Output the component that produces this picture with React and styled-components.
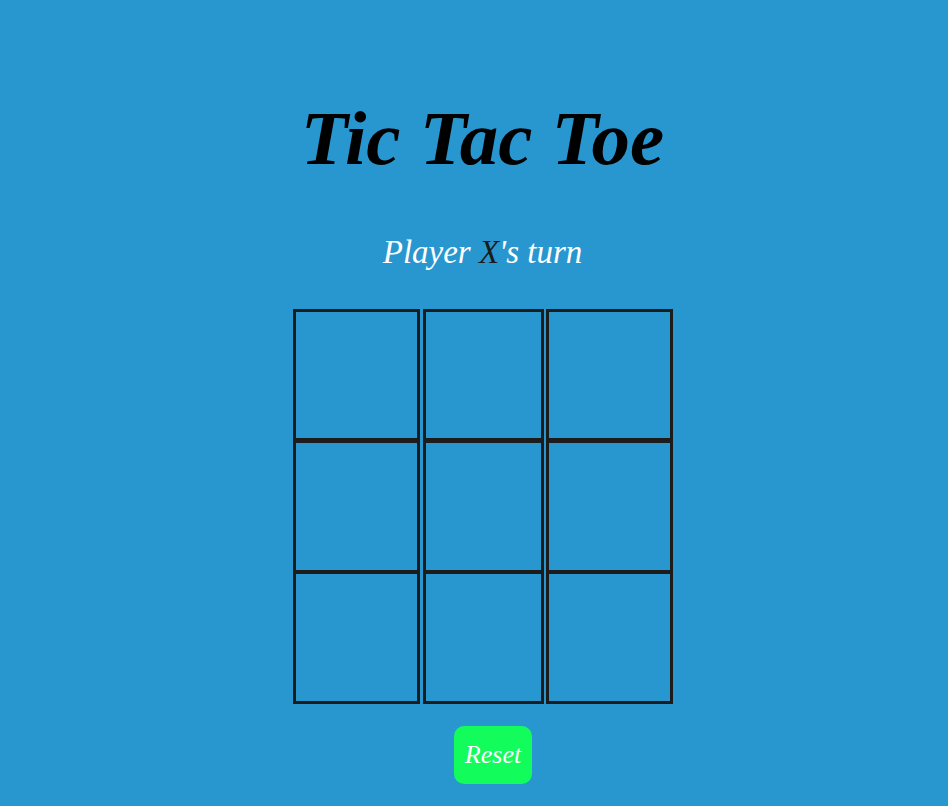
import styled, { createGlobalStyle } from 'styled-components'

const GlobalStyle = createGlobalStyle`
    body {
        margin: 0;
        background-color: #2997cf;
        font-family: "Liberation Serif", "Times New Roman", serif;
    }
`

const Container = styled.div`
    min-height: 100vh;
    padding-left: 17px;
    display: flex;
    flex-direction: column;
    align-items: center;
`
const Title = styled.h1`
    margin: 100px 0 0;
    font-size: 77px;
    line-height: 1;
    font-weight: 700;
    font-style: italic;
    color: #000;
`
const Status = styled.p`
    margin: 59px 0 0;
    font-size: 33px;
    line-height: 1;
    font-style: italic;
    color: #fff;
`
const Mark = styled.span`
    color: #1b1b1b;
`
const Board = styled.div`
    margin-top: 40px;
    display: flex;
    flex-direction: column;
`
const Row = styled.div`
    display: flex;
    margin-top: ${p => p.$overlap || 0}px;
`
const Cell = styled.div`
    box-sizing: border-box;
    width: ${p => p.$w}px;
    height: ${p => p.$h}px;
    margin-left: ${p => p.$gap || 0}px;
    border: 3px solid #1c1c1c;
`
const Button = styled.button`
    margin: 22px 0 0 21px;
    width: 78px;
    height: 58px;
    border: none;
    border-radius: 10px;
    background-color: #12fc5c;
    color: #fff;
    font-family: inherit;
    font-style: italic;
    font-size: 26px;
    padding: 0;
    cursor: pointer;
`

const rows = [
    { h: 132, overlap: 0 },
    { h: 133, overlap: -1 },
    { h: 133, overlap: -2 },
]
const cols = [
    { w: 127, gap: 0 },
    { w: 121, gap: 3 },
    { w: 127, gap: 2 },
]

const App = () => {
    return (
        <>
            <GlobalStyle />
            <Container>
                <Title>Tic Tac Toe</Title>
                <Status>Player <Mark>X</Mark>'s turn</Status>
                <Board>
                    {rows.map((r, i) => (
                        <Row key={i} $overlap={r.overlap}>
                            {cols.map((c, j) => (
                                <Cell key={j} $w={c.w} $h={r.h} $gap={c.gap} />
                            ))}
                        </Row>
                    ))}
                </Board>
                <Button>Reset</Button>
            </Container>
        </>
    )
}

export default App
